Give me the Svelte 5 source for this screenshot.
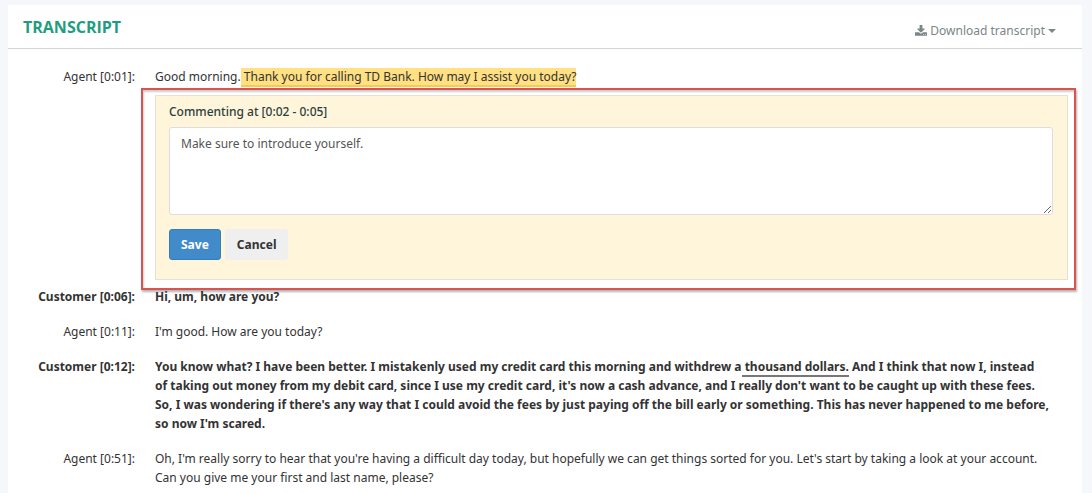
<script>
  let comment = $state("Make sure to introduce yourself.");

  const lines = [
    {
      speaker: "Agent",
      time: "0:01",
      parts: [
        { text: "Good morning." },
        {
          text: " Thank you for calling TD Bank. How may I assist you today?",
          mark: "selected",
        },
      ],
      commenting: "0:02 - 0:05",
    },
    {
      speaker: "Customer",
      time: "0:06",
      parts: [{ text: "Hi, um, how are you?" }],
    },
    {
      speaker: "Agent",
      time: "0:11",
      parts: [{ text: "I'm good. How are you today?" }],
    },
    {
      speaker: "Customer",
      time: "0:12",
      parts: [
        {
          text: "You know what? I have been better. I mistakenly used my credit card this morning and withdrew a",
        },
        { text: " thousand dollars.", mark: "noted" },
        {
          text: " And I think that now I, instead\nof taking out money from my debit card, since I use my credit card, it's now a cash advance, and I really don't want to be caught up with these fees. So, I was wondering if there's any way that I could avoid the fees by just paying off the bill early or something. This has never happened to me before, so now I'm scared.",
        },
      ],
    },
    {
      speaker: "Agent",
      time: "0:51",
      parts: [
        {
          text: "Oh, I'm really sorry to hear that you're having a difficult day today, but hopefully we can get things sorted for you. Let's start by taking a look at your account. Can you give me your first and last name, please?",
        },
      ],
    },
  ];
</script>

<main class="page">
  <section class="panel">
    <header class="panel-header">
      <h1>TRANSCRIPT</h1>
      <button type="button" class="download">
        <svg width="12" height="12" viewBox="0 -64 1664 1600" aria-hidden="true">
          <path
            fill="currentColor"
            d="M1280 1216q0-26-19-45t-45-19-45 19-19 45 19 45 45 19 45-19 19-45zm256 0q0-26-19-45t-45-19-45 19-19 45 19 45 45 19 45-19 19-45zm128-224v320q0 40-28 68t-68 28H96q-40 0-68-28t-28-68V992q0-40 28-68t68-28h465l135 136q58 56 136 56t136-56l136-136h464q40 0 68 28t28 68zm-325-569q17 41-14 70l-448 448q-18 19-45 19t-45-19L339 493q-31-29-14-70 17-39 59-39h256V-64q0-26 19-45t45-19h256q26 0 45 19t19 45v448h256q42 0 59 39z"
          />
        </svg>
        <span class="download-label">Download transcript</span>
        <span class="caret"></span>
      </button>
    </header>

    <div class="transcript">
      {#each lines as line}
        <div
          class="line"
          class:customer={line.speaker === "Customer"}
          class:has-comment={line.commenting}
        >
          <div class="speaker">{line.speaker} [{line.time}]:</div>
          <div class="speech">
            <p>{#each line.parts as part}<span class={part.mark}>{part.text}</span>{/each}</p>

            {#if line.commenting}
              <form class="comment" onsubmit={(e) => e.preventDefault()}>
                <label for="comment-text">Commenting at [{line.commenting}]</label>
                <textarea id="comment-text" bind:value={comment}></textarea>
                <div class="actions">
                  <button type="submit" class="btn save">Save</button>
                  <button type="button" class="btn cancel">Cancel</button>
                </div>
              </form>
            {/if}
          </div>
        </div>
      {/each}
    </div>
  </section>
</main>

<style>
  :global(body) {
    margin: 0;
    background: #f6f7fa;
  }

  .page {
    display: flex;
    box-sizing: border-box;
    min-height: 100vh;
    padding: 5px 10px 0 8px;
    font-family: "Noto Sans", "Open Sans", sans-serif;
    font-size: 12px;
    line-height: 19px;
    color: #333;
  }

  .panel {
    flex: 1;
    min-width: 0;
    background: #fff;
  }

  .panel-header {
    display: flex;
    align-items: center;
    justify-content: space-between;
    box-sizing: border-box;
    height: 44px;
    padding: 0 26px 0 15px;
    border-bottom: 1px solid #d3d7d7;
  }

  h1 {
    margin: 0;
    font-family: "Open Sans", sans-serif;
    font-size: 16px;
    line-height: 24px;
    font-weight: 700;
    color: #1f9d7e;
  }

  .download {
    display: flex;
    align-items: center;
    gap: 3px;
    padding: 8px 0 0;
    border: 0;
    background: none;
    font: inherit;
    color: #7b8686;
    cursor: pointer;
  }

  .caret {
    border-top: 4px solid currentColor;
    border-left: 4px solid transparent;
    border-right: 4px solid transparent;
  }

  .transcript {
    padding: 18px 14px 0 15px;
  }

  .line {
    display: grid;
    grid-template-columns: 112px 1fr;
    column-gap: 20px;
    margin-bottom: 16px;
  }

  .line:last-child {
    margin-bottom: 0;
  }

  .line.has-comment {
    margin-bottom: 7px;
  }

  .customer {
    font-weight: 700;
  }

  .speaker {
    text-align: right;
    white-space: nowrap;
  }

  p {
    margin: 0;
    padding-right: 17px;
    white-space: pre-line;
  }

  /* Words the open comment is about */
  .selected {
    background: #ffe082;
    border-bottom: 2px solid #fdc84b;
  }

  /* Words that already carry a comment */
  .noted {
    border-bottom: 2px solid #777;
  }

  .comment {
    position: relative;
    margin-top: 9px;
    padding: 6px 14px 19px 13px;
    border: 1px solid #e6e2d3;
    background: #fef5db;
  }

  /* Red callout frame around the form */
  .comment::before {
    content: "";
    position: absolute;
    inset: -8px -9px -11px -15px;
    border: 2px solid #d9534f;
    box-shadow:
      1px 2px 2px rgba(0, 0, 0, 0.3),
      inset 1px 2px 2px rgba(0, 0, 0, 0.2);
    pointer-events: none;
  }

  label {
    display: block;
    margin-bottom: 6px;
    color: #2c3e3e;
    font-weight: 500;
  }

  textarea {
    display: block;
    box-sizing: border-box;
    width: 100%;
    height: 88px;
    padding: 6px 11px;
    border: 1px solid #ddd;
    border-radius: 3px;
    background: #fff;
    font: inherit;
    color: #555;
    resize: vertical;
  }

  .actions {
    display: flex;
    gap: 4px;
    margin-top: 14px;
  }

  .btn {
    padding: 5px 11px;
    border: 1px solid transparent;
    border-radius: 3px;
    font: inherit;
    font-weight: 700;
    cursor: pointer;
  }

  .save {
    border-color: #357ebd;
    background: #428bca;
    color: #fff;
  }

  .cancel {
    background: #efefef;
    color: #333;
  }
</style>
